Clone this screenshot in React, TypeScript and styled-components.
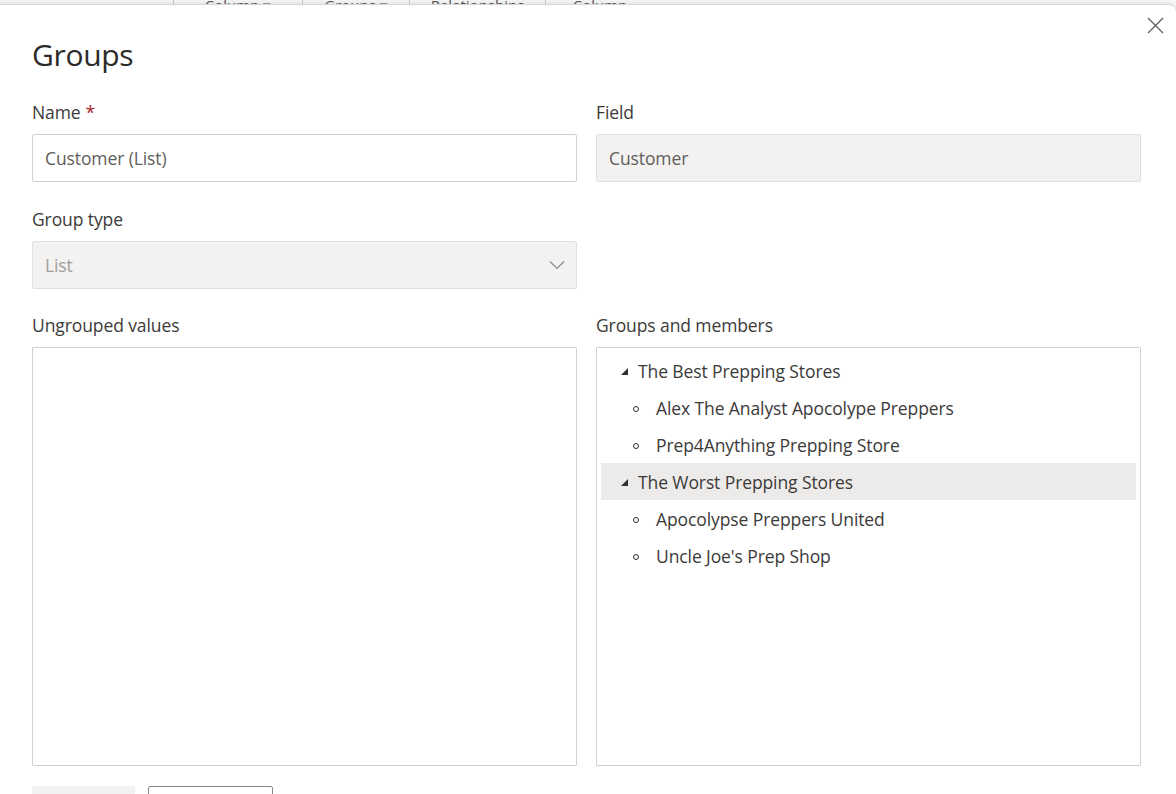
import React from "react";
import styled, { createGlobalStyle } from "styled-components";

const Global = createGlobalStyle`
  html, body { margin: 0; padding: 0; background: #ffffff; }
  body { font-family: "Open Sans", "Noto Sans", sans-serif; color: #323130; }
  * { box-sizing: border-box; }
`;

const Page = styled.div`
  width: 1176px;
  height: 794px;
  overflow: hidden;
  background: #f7f7f7;
`;

const BackStrip = styled.div`
  height: 4px;
  overflow: hidden;
  display: flex;
  align-items: flex-end;
  padding-left: 173px;
  background: #f7f7f7;
`;

const BackTab = styled.div<{ $w: number }>`
  width: ${(p) => p.$w}px;
  flex: none;
  text-align: center;
  font-size: 15px;
  line-height: 16px;
  color: #555;
  border-left: 1px solid #c8c8c8;
  margin-bottom: -9px;
  white-space: nowrap;
`;

const Dialog = styled.div`
  height: 790px;
  margin-left: -10px;
  background: #ffffff;
  border-top: 1px solid #d6d6d6;
  border-top-right-radius: 8px;
  box-shadow: 0 0 6px rgba(0, 0, 0, 0.12);
  position: relative;
  padding: 24px 35px 0 42px;
`;

const Close = styled.button`
  position: absolute;
  top: 6px;
  right: 7px;
  width: 28px;
  height: 28px;
  border: none;
  background: transparent;
  padding: 0;
  display: flex;
  align-items: center;
  justify-content: center;
`;

const Title = styled.h1`
  margin: 0;
  font-size: 30px;
  font-weight: 400;
  line-height: 52px;
  color: #2b2a29;
  letter-spacing: -0.3px;
`;

const Grid = styled.div`
  display: grid;
  grid-template-columns: 545px 545px;
  column-gap: 19px;
  margin-top: 19px;
`;

const Field = styled.div<{ $gap?: number }>`
  display: flex;
  flex-direction: column;
  margin-bottom: ${(p) => p.$gap ?? 25}px;
`;

const Label = styled.div`
  font-size: 17.5px;
  line-height: 24px;
  color: #3b3a39;
  margin-bottom: 10px;
  letter-spacing: -0.1px;
`;

const Required = styled.span`
  color: #a4262c;
  margin-left: 5px;
`;

const Input = styled.div<{ $disabled?: boolean }>`
  height: 48px;
  border: 1px solid ${(p) => (p.$disabled ? "#e1dfdd" : "#d2d0ce")};
  border-radius: 2px;
  background: ${(p) => (p.$disabled ? "#f3f2f1" : "#ffffff")};
  display: flex;
  align-items: center;
  justify-content: space-between;
  padding: 0 11px 0 12px;
  font-size: 17.5px;
  letter-spacing: -0.1px;
  color: ${(p) => (p.$disabled ? "#a19f9d" : "#605e5c")};
`;

const ReadValue = styled.span`
  color: #605e5c;
`;

const ListBox = styled.div`
  height: 419px;
  border: 1px solid #d2d0ce;
  border-radius: 1px;
  background: #fff;
  padding: 4px;
`;

const TreeRow = styled.div<{ $level: number; $selected?: boolean }>`
  height: 37px;
  display: flex;
  align-items: center;
  padding-left: ${(p) => (p.$level === 0 ? 20 : 32)}px;
  background: ${(p) => (p.$selected ? "#edebe9" : "transparent")};
  font-size: 17.5px;
  letter-spacing: -0.1px;
  color: #3b3a39;
`;

const Caret = styled.span`
  width: 0;
  height: 0;
  border-left: 7px solid transparent;
  border-bottom: 7px solid #323130;
  margin-right: 10px;
  margin-top: 2px;
`;

const Bullet = styled.span`
  width: 6px;
  height: 6px;
  border: 1.3px solid #323130;
  border-radius: 50%;
  margin-right: 17px;
  margin-top: 2px;
`;

const Footer = styled.div`
  display: flex;
  gap: 13px;
  margin-top: -5px;
`;

const Button = styled.div<{ $primary?: boolean }>`
  width: ${(p) => (p.$primary ? 103 : 125)}px;
  height: 32px;
  border-radius: 2px;
  background: ${(p) => (p.$primary ? "#f3f2f1" : "#ffffff")};
  border: 1px solid ${(p) => (p.$primary ? "#f3f2f1" : "#8a8886")};
`;

const groups = [
  {
    name: "The Best Prepping Stores",
    members: ["Alex The Analyst Apocolype Preppers", "Prep4Anything Prepping Store"],
  },
  {
    name: "The Worst Prepping Stores",
    selected: true,
    members: ["Apocolypse Preppers United", "Uncle Joe's Prep Shop"],
  },
];

const tabs = [
  { label: "Column ▾", w: 129 },
  { label: "Groups ▾", w: 107 },
  { label: "Relationships", w: 136 },
  { label: "Column", w: 109 },
  { label: "", w: 20 },
];

export default function App() {
  return (
    <Page>
      <Global />
      <BackStrip>
        {tabs.map((t, i) => (
          <BackTab key={i} $w={t.w}>
            {t.label}
          </BackTab>
        ))}
      </BackStrip>
      <Dialog>
        <Close aria-label="Close">
          <svg width="17" height="17" viewBox="0 0 17 17">
            <path d="M1 1 L16 16 M16 1 L1 16" stroke="#605e5c" strokeWidth="1.3" fill="none" />
          </svg>
        </Close>
        <Title>Groups</Title>
        <Grid>
          <Field>
            <Label>
              Name<Required>*</Required>
            </Label>
            <Input>Customer (List)</Input>
          </Field>
          <Field>
            <Label>Field</Label>
            <Input $disabled>
              <ReadValue>Customer</ReadValue>
            </Input>
          </Field>
          <Field $gap={24}>
            <Label>Group type</Label>
            <Input $disabled>
              <span>List</span>
              <svg width="16" height="10" viewBox="0 0 16 10">
                <path d="M1 1.5 L8 8.5 L15 1.5" stroke="#8a8886" strokeWidth="1.1" fill="none" />
              </svg>
            </Input>
          </Field>
          <div />
          <Field>
            <Label>Ungrouped values</Label>
            <ListBox />
          </Field>
          <Field>
            <Label>Groups and members</Label>
            <ListBox>
              {groups.map((g) => (
                <React.Fragment key={g.name}>
                  <TreeRow $level={0} $selected={g.selected}>
                    <Caret />
                    {g.name}
                  </TreeRow>
                  {g.members.map((m) => (
                    <TreeRow key={m} $level={1}>
                      <Bullet />
                      {m}
                    </TreeRow>
                  ))}
                </React.Fragment>
              ))}
            </ListBox>
          </Field>
        </Grid>
        <Footer>
          <Button $primary />
          <Button />
        </Footer>
      </Dialog>
    </Page>
  );
}
